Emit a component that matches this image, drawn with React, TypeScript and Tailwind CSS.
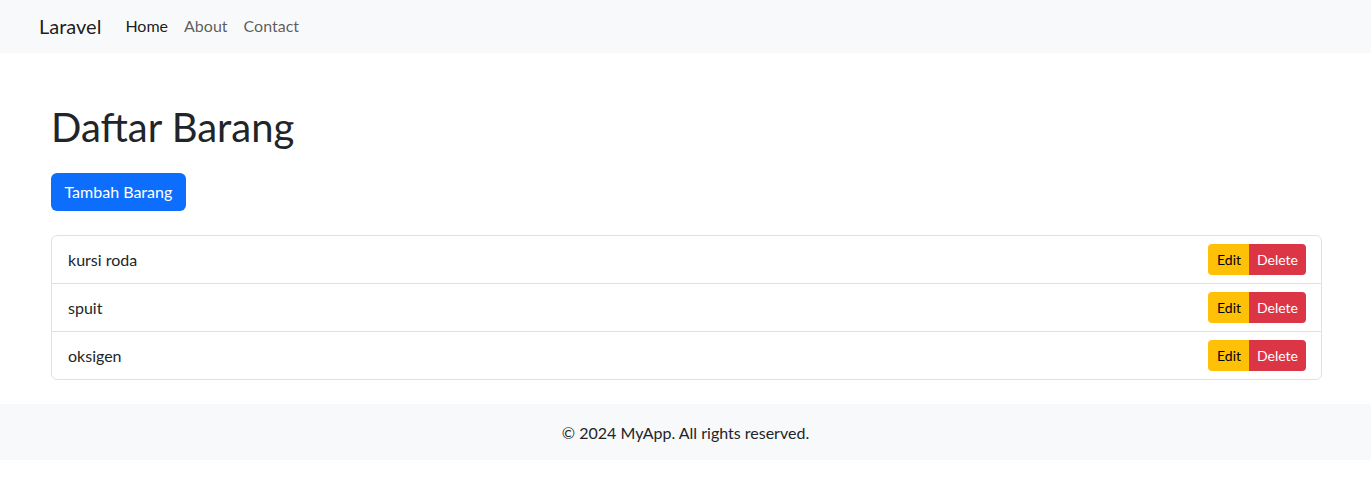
import React from "react";

const items = ["kursi roda", "spuit", "oksigen"];

export default function App() {
  return (
    <div
      className="min-h-[477px] bg-white text-[#212529] text-base leading-[1.5]"
      style={{ fontFamily: 'Lato, "Noto Sans", sans-serif' }}
    >
      <nav className="h-[53px] bg-[#f8f9fa] flex items-center pl-[39px] pb-[1px]">
        <span className="text-[20px] text-black/90 mr-4">Laravel</span>
        <div className="flex">
          <a className="px-2 text-black/90">Home</a>
          <a className="px-2 text-black/65">About</a>
          <a className="px-2 text-black/65">Contact</a>
        </div>
      </nav>
      <main className="pl-[51px] pr-[49px] pt-[50px] pb-[24px]">
        <h1 className="text-[40px] leading-[1.2] font-normal mb-[22px]">Daftar Barang</h1>
        <button className="h-[38px] px-[13.5px] rounded-[6px] bg-[#0d6efd] text-white text-base">
          Tambah Barang
        </button>
        <ul className="mt-[24px] border border-[#dee2e6] rounded-[6px]">
          {items.map((it, i) => (
            <li
              key={it}
              className={`flex items-center justify-between pl-[16px] pr-[15px] ${
                i > 0 ? "h-[48px] border-t border-[#dee2e6]" : "h-[47px]"
              }`}
            >
              <span>{it}</span>
              <div className="flex">
                <button className="h-[31px] pl-[9px] pr-[8px] text-[14px] bg-[#ffc107] text-black rounded-l-[4px]">
                  Edit
                </button>
                <button className="h-[31px] px-[8px] text-[14px] bg-[#dc3545] text-white rounded-r-[4px]">
                  Delete
                </button>
              </div>
            </li>
          ))}
        </ul>
      </main>
      <footer className="bg-[#f8f9fa] pt-[17px] pb-[15px] text-center">
        © 2024 MyApp. All rights reserved.
      </footer>
    </div>
  );
}
